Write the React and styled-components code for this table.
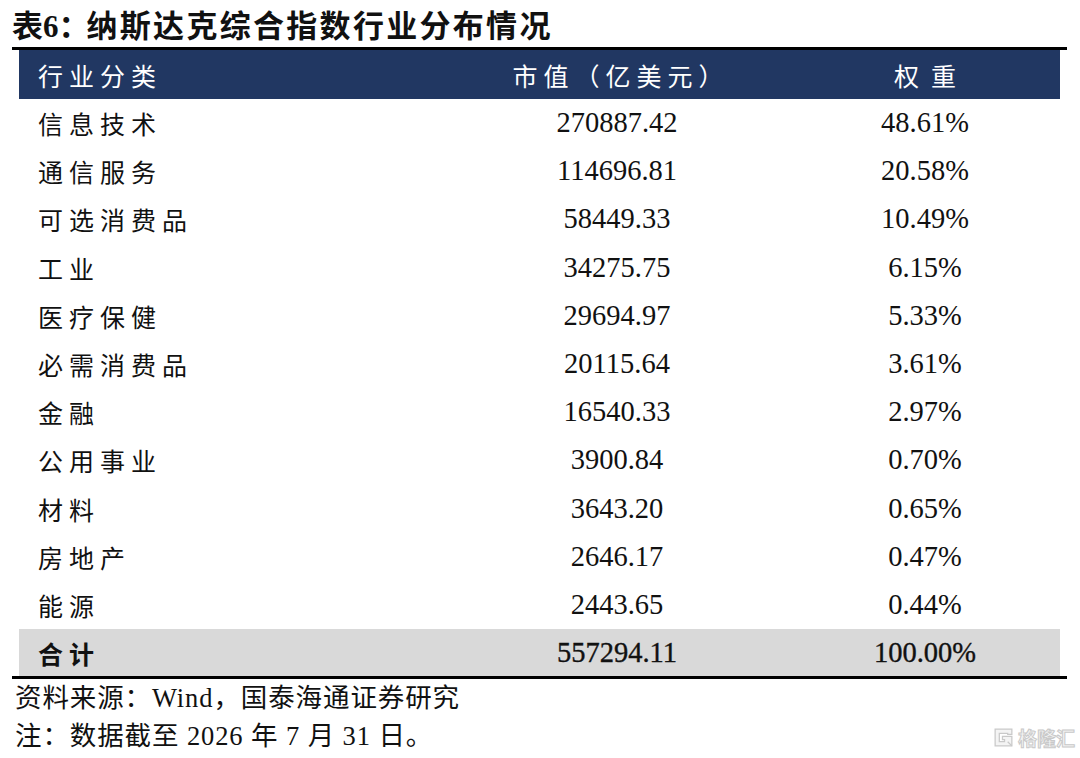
import React from "react";
import styled, { createGlobalStyle } from "styled-components";

const Global = createGlobalStyle`
  html, body { margin: 0; padding: 0; background: #ffffff; }
  body { width: 1080px; height: 758px; overflow: hidden; }
`;

const CJK = `"Liberation Serif", "Noto Sans CJK SC", serif`;

const Page = styled.div`
  position: relative;
  width: 1080px;
  height: 758px;
  box-sizing: border-box;
  padding: 6px 13px 0 12px;
  font-family: ${CJK};
  color: #111;
`;

const Title = styled.h1`
  margin: 0;
  height: 41px;
  font-family: ${CJK};
  font-size: 31px;
  font-weight: 700;
  line-height: 42px;
  letter-spacing: 2.3px;
  color: #111;
  white-space: nowrap;
`;

const TitleLead = styled.span`
  letter-spacing: 0;
  margin-right: -3px;
`;

const Frame = styled.div`
  border-top: 3px solid #000;
  border-bottom: 3px solid #000;
  padding: 0 7px;
`;

const Row = styled.div`
  display: grid;
  grid-template-columns: 425px 346px 270px;
  align-items: center;
  height: ${(p) => p.$h || 48}px;
  background: ${(p) => p.$bg || "transparent"};
  color: ${(p) => p.$color || "#111"};
`;

const Label = styled.div`
  padding-left: 19px;
  font-family: "Noto Sans CJK SC", sans-serif;
  font-size: 25px;
  letter-spacing: 6px;
  font-weight: ${(p) => (p.$bold ? 700 : 400)};
  white-space: nowrap;
`;

const Num = styled.div`
  text-align: center;
  font-family: "Liberation Serif", serif;
  font-size: 28.5px;
  font-weight: 400;
  white-space: nowrap;
  ${(p) => p.$strong && "-webkit-text-stroke: 0.35px #111;"}
`;

const HeadText = styled.div`
  text-align: ${(p) => p.$align || "center"};
  padding-left: ${(p) => p.$pl || 0}px;
  margin-right: ${(p) => p.$mr || 0}px;
  font-family: "Noto Sans CJK SC", sans-serif;
  font-size: 25px;
  letter-spacing: ${(p) => p.$ls ?? 6}px;
  white-space: nowrap;
`;

const Note = styled.div`
  font-family: ${CJK};
  font-size: 26.5px;
  line-height: 38px;
  padding-left: 3px;
  letter-spacing: 0.9px;
  white-space: nowrap;
`;

const Notes = styled.div`
  padding-top: 0px;
`;

const Watermark = styled.div`
  position: absolute;
  right: 5px;
  bottom: 7px;
  display: flex;
  align-items: center;
  gap: 3px;
  font-family: "Noto Sans CJK SC", sans-serif;
  font-size: 19px;
  font-weight: 700;
  color: #f4f4f4;
  -webkit-text-stroke: 1px #c9c9c9;
`;

const rows = [
  ["信息技术", "270887.42", "48.61%"],
  ["通信服务", "114696.81", "20.58%"],
  ["可选消费品", "58449.33", "10.49%"],
  ["工业", "34275.75", "6.15%"],
  ["医疗保健", "29694.97", "5.33%"],
  ["必需消费品", "20115.64", "3.61%"],
  ["金融", "16540.33", "2.97%"],
  ["公用事业", "3900.84", "0.70%"],
  ["材料", "3643.20", "0.65%"],
  ["房地产", "2646.17", "0.47%"],
  ["能源", "2443.65", "0.44%"],
];

const Logo = () => (
  <svg width="23" height="23" viewBox="0 0 22 22">
    <path
      d="M3 3 H19 V8 H15 V7 H7 V15 H12 V13 H10 V10 H19 V19 H3 Z"
      fill="#f4f4f4"
      stroke="#c9c9c9"
      strokeWidth="1.2"
    />
    <path d="M15 15 L19 19" stroke="#c9c9c9" strokeWidth="1.2" />
  </svg>
);

export default function App() {
  return (
    <Page>
      <Global />
      <Title>
        <TitleLead>表6：</TitleLead>纳斯达克综合指数行业分布情况
      </Title>
      <Frame>
        <Row $h={49} $bg="#213762" $color="#ffffff">
          <HeadText $align="left" $pl={19}>行业分类</HeadText>
          <HeadText $ls={6} $mr={-8}>市值（亿美元）</HeadText>
          <HeadText $ls={12} $mr={-12}>权重</HeadText>
        </Row>
        {rows.map(([a, b, c]) => (
          <Row key={a} $h={48.2}>
            <Label>{a}</Label>
            <Num>{b}</Num>
            <Num>{c}</Num>
          </Row>
        ))}
        <Row $h={47} $bg="#d9d9d9">
          <Label $bold>合计</Label>
          <Num $strong>557294.11</Num>
          <Num $strong>100.00%</Num>
        </Row>
      </Frame>
      <Notes>
        <Note>资料来源：Wind，国泰海通证券研究</Note>
        <Note>注：数据截至 2026 年 7 月 31 日。</Note>
      </Notes>
      <Watermark>
        <Logo />
        <span>格隆汇</span>
      </Watermark>
    </Page>
  );
}
